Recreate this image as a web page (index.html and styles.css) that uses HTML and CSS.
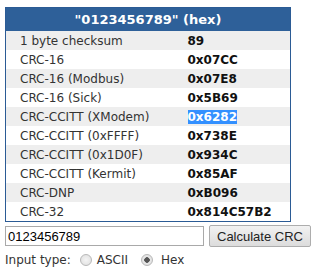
FILE: index.html
```
<!DOCTYPE html>
<html>
<head>
	<title>CRC Calculator</title>
	<meta charset="UTF-8">
	<link rel="stylesheet" href="styles.css">
</head>
<body>
	<div class="calc">
		<table class="results">
			<colgroup>
				<col class="name-col">
				<col class="val-col">
			</colgroup>
			<thead>
				<tr><th colspan="2">"0123456789" (hex)</th></tr>
			</thead>
			<tbody>
				<tr><td>1 byte checksum</td><td class="val">89</td></tr>
				<tr><td>CRC-16</td><td class="val">0x07CC</td></tr>
				<tr><td>CRC-16 (Modbus)</td><td class="val">0x07E8</td></tr>
				<tr><td>CRC-16 (Sick)</td><td class="val">0x5B69</td></tr>
				<tr><td>CRC-CCITT (XModem)</td><td class="val"><span class="sel">0x6282</span></td></tr>
				<tr><td>CRC-CCITT (0xFFFF)</td><td class="val">0x738E</td></tr>
				<tr><td>CRC-CCITT (0x1D0F)</td><td class="val">0x934C</td></tr>
				<tr><td>CRC-CCITT (Kermit)</td><td class="val">0x85AF</td></tr>
				<tr><td>CRC-DNP</td><td class="val">0xB096</td></tr>
				<tr><td>CRC-32</td><td class="val">0x814C57B2</td></tr>
			</tbody>
		</table>
		<form class="input-row">
			<input type="text" class="data" value="0123456789">
			<button type="button" class="calc-btn">Calculate CRC</button>
		</form>
		<div class="type-row">
			<span>Input type:</span>
			<label><input type="radio" name="type"> ASCII</label>
			<label class="hex"><input type="radio" name="type" checked> Hex</label>
		</div>
	</div>
</body>
</html>
```
FILE: styles.css
```
body {
	margin: 0;
	background: #fff;
	font-family: "DejaVu Sans", Verdana, sans-serif;
	color: #333;
}
.calc {
	padding: 7px 0 0 5px;
}
.results {
	border-collapse: collapse;
	table-layout: fixed;
	width: 285px;
	border: 1px solid #2b5b95;
	border-top: none;
	font-size: 12px;
}
.name-col {
	width: 182px;
}
.val-col {
	width: 103px;
}
.results th {
	background-color: #2e6099;
	color: #fff;
	font-size: 13px;
	height: 23px;
	padding: 0;
	text-align: center;
	border-top: 1px solid #2b5b95;
}
.results td {
	height: 19px;
	padding: 0 0 0 14px;
	white-space: nowrap;
}
.results td.val {
	font-weight: bold;
	color: #111;
	padding-left: 0;
}
.results tbody tr:nth-child(odd) {
	background-color: #eeeeee;
}
.sel {
	background-color: #3390ff;
	color: #fff;
}
.input-row {
	display: flex;
	align-items: center;
	gap: 5px;
	margin: 3px 0 0 0;
}
.data {
	width: 199px;
	height: 20px;
	box-sizing: border-box;
	border: 1px solid #a9a9a9;
	padding: 0 2px;
	font-family: "Liberation Sans", Arial, sans-serif;
	font-size: 13px;
	color: #000;
}
.calc-btn {
	width: 102px;
	height: 22px;
	border: 1px solid #adadad;
	border-radius: 2px;
	background: linear-gradient(#f2f2f2, #dcdcdc);
	font-family: "Liberation Sans", Arial, sans-serif;
	font-size: 13px;
	color: #222;
	padding: 0;
}
.type-row {
	display: flex;
	align-items: center;
	font-size: 12px;
	margin-top: 6px;
}
.type-row label {
	display: flex;
	align-items: center;
}
.type-row input {
	appearance: none;
	margin: 0 5px 0 9px;
	width: 12px;
	height: 12px;
	border: 1px solid #b8b8b8;
	border-radius: 50%;
	background: radial-gradient(#f4f4f4, #dedede);
	box-sizing: border-box;
}
.type-row input:checked {
	background: radial-gradient(circle, #555 0, #555 2.5px, #e8e8e8 3px, #dcdcdc 100%);
}
.type-row .hex input {
	margin: 0 8px 0 13px;
}
```
